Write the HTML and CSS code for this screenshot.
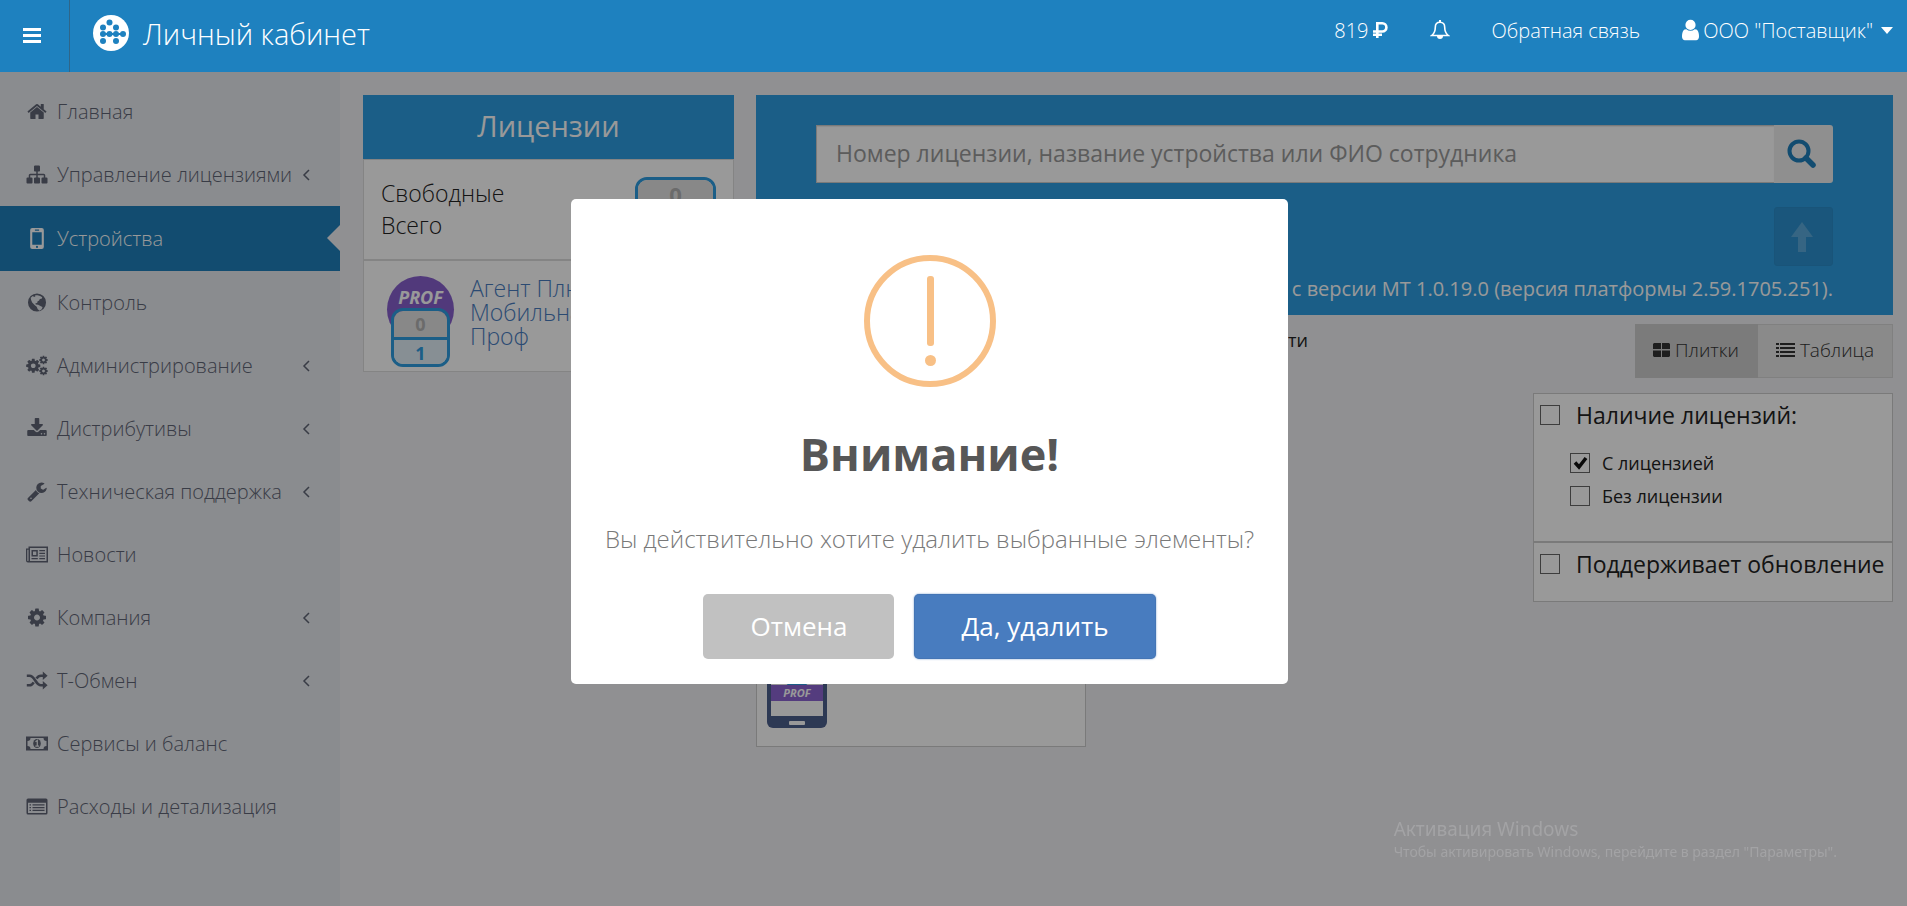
FILE: index.html
```html
<!DOCTYPE html>
<html lang="ru">
<head>
    <meta charset="UTF-8">
    <meta name="viewport" content="width=device-width, initial-scale=1.0">
    <title>Личный кабинет</title>
    <link rel="stylesheet" href="styles.css">
</head>
<body>
    <!-- Иконки -->
    <svg class="sprite" aria-hidden="true">
        <symbol id="i-home" viewBox="0 0 1792 1792"><path d="M1472 992v480q0 26-19 45t-45 19h-384v-384h-256v384h-384q-26 0-45-19t-19-45v-480q0-1 .5-3t.5-3l575-474 575 474q1 2 1 6zm223-69l-62 74q-8 9-21 11h-3q-13 0-21-7l-692-577-692 577q-12 8-24 7-13-2-21-11l-62-74q-8-10-7-23.5t11-21.5l719-599q32-26 76-26t76 26l244 204v-195q0-14 9-23t23-9h192q14 0 23 9t9 23v408l219 182q10 8 11 21.5t-7 23.5z"/></symbol>
        <symbol id="i-sitemap" viewBox="0 0 1792 1792"><path d="M1792 1248v320q0 40-28 68t-68 28h-320q-40 0-68-28t-28-68v-320q0-40 28-68t68-28h96v-192h-512v192h96q40 0 68 28t28 68v320q0 40-28 68t-68 28h-320q-40 0-68-28t-28-68v-320q0-40 28-68t68-28h96v-192h-512v192h96q40 0 68 28t28 68v320q0 40-28 68t-68 28h-320q-40 0-68-28t-28-68v-320q0-40 28-68t68-28h96v-192q0-52 38-90t90-38h512v-192h-96q-40 0-68-28t-28-68v-320q0-40 28-68t68-28h320q40 0 68 28t28 68v320q0 40-28 68t-68 28h-96v192h512q52 0 90 38t38 90v192h96q40 0 68 28t28 68z"/></symbol>
        <symbol id="i-phone" viewBox="0 0 20 20"><path fill-rule="evenodd" d="M5.500 0h9a2 2 0 0 1 2 2v16a2 2 0 0 1-2 2h-9a2 2 0 0 1-2-2V2a2 2 0 0 1 2-2zM5.500 4v12h9V4zM8 1.500v1h4v-1zM10 17a1 1 0 1 0 0 2 1 1 0 0 0 0-2z"/></symbol>
        <symbol id="i-globe" viewBox="0 0 20 20"><path fill-rule="evenodd" d="M10 1.400a8.600 8.600 0 1 0 0 17.200 8.600 8.600 0 0 0 0-17.200zM10.500 3l2.500.8 2 1.200-.6 1.400-1.700.2-.7 1.500-1.600 1-.2 1.300-1.700.3.300 1.300 2.300.1 2.600 1.400 1.600.7-.8 2.300-2 1.300-1.800-1.300-1-2.500-2-1.600-2.300-2.500-1-2.200L4 5.500l2-1.600 1.300.8 1.200-.6-.3-1z"/></symbol>
        <symbol id="i-cog" viewBox="0 0 1792 1792"><path d="M1152 896q0-106-75-181t-181-75-181 75-75 181 75 181 181 75 181-75 75-181zm512-109v222q0 12-8 23t-20 13l-185 28q-19 54-39 91 35 50 107 138 10 12 10 25t-9 23q-27 37-99 108t-94 71q-12 0-26-9l-138-108q-44 23-91 38-16 136-29 186-7 28-36 28h-222q-14 0-24.500-8.500t-11.500-21.500l-28-184q-49-16-90-37l-141 107q-10 9-25 9-14 0-25-11-126-114-165-168-7-10-7-23 0-12 8-23 15-21 51-66.500t54-70.500q-27-50-41-99l-183-27q-13-2-21-12.500t-8-23.500v-222q0-12 8-23t19-13l186-28q14-46 39-92-40-57-107-138-10-12-10-24 0-10 9-23 26-36 98.500-107.500t94.500-71.500q13 0 26 10l138 107q44-23 91-38 16-136 29-186 7-28 36-28h222q14 0 24.500 8.500t11.500 21.500l28 184q49 16 90 37l142-107q9-9 24-9 13 0 25 10 129 119 165 170 7 8 7 22 0 12-8 23-15 21-51 66.500t-54 70.500q26 50 41 98l183 28q13 2 21 12.500t8 23.500z"/></symbol>
        <symbol id="i-cogs" viewBox="0 0 22 20"><use href="#i-cog" x="-1" y="2" width="16.500" height="16.500"/><use href="#i-cog" x="12.500" y="-.5" width="10" height="10"/><use href="#i-cog" x="12.500" y="10.500" width="10" height="10"/></symbol>
        <symbol id="i-download" viewBox="0 0 1792 1792"><path d="M1344 1344q0-26-19-45t-45-19-45 19-19 45 19 45 45 19 45-19 19-45zm256 0q0-26-19-45t-45-19-45 19-19 45 19 45 45 19 45-19 19-45zm128-224v320q0 40-28 68t-68 28h-1472q-40 0-68-28t-28-68v-320q0-40 28-68t68-28h465l135 136q58 56 136 56t136-56l136-136h464q40 0 68 28t28 68zm-325-569q17 41-14 70l-448 448q-18 19-45 19t-45-19l-448-448q-31-29-14-70 17-39 59-39h256v-448q0-26 19-45t45-19h256q26 0 45 19t19 45v448h256q42 0 59 39z"/></symbol>
        <symbol id="i-wrench" viewBox="0 0 1792 1792"><path d="M448 1472q0-26-19-45t-45-19-45 19-19 45 19 45 45 19 45-19 19-45zm644-420l-682 682q-37 37-90 37-52 0-91-37l-106-108q-38-36-38-90 0-53 38-91l681-681q39 98 114.500 173.500t173.500 114.500zm634-435q0 39-23 106-47 134-164.500 217.500t-258.500 83.500q-185 0-316.500-131.500t-131.500-316.500 131.500-316.500 316.500-131.500q58 0 121.500 16.500t107.500 46.500q16 11 16 28t-16 28l-293 169v224l193 107q5-3 79-48.500t135.500-81 70.500-35.500q15 0 23.500 10t8.500 25z"/></symbol>
        <symbol id="i-news" viewBox="0 0 22 20"><path fill-rule="evenodd" d="M2.500 2H22v16H2a2 2 0 0 1-2-2V4h2.500zM4 3.500v13h16.500v-13zM1.300 5.300V16a.6.6 0 0 0 1.200 0V5.300zM5.500 5.500h6.300V12H5.500zM7 7v3.500h3.300V7zM13.300 5.500H19v1.200h-5.700zM13.300 8.200H19v1.200h-5.700zM13.300 10.900H19v1.200h-5.700zM5.500 13.600h6.300v1.200H5.500zM13.300 13.600H19v1.200h-5.700z"/></symbol>
        <symbol id="i-random" viewBox="0 0 22 20"><path d="M.8 5.200h2.700c5.500 0 6 9.600 11.500 9.600h3M.8 14.800h2.700c2 0 3.200-1.300 4.200-3M10.500 8c1.200-1.900 2.500-2.800 4.500-2.800h3" fill="none" stroke="currentColor" stroke-width="2.600"/><path d="M16.800 1l4.800 4.200-4.800 4.200zM16.800 10.600l4.800 4.200-4.800 4.200z"/></symbol>
        <symbol id="i-money" viewBox="0 0 22 20"><path fill-rule="evenodd" d="M0 3h22v14H0zM4.500 4.500a3 3 0 0 1-3 3v5a3 3 0 0 1 3 3h13a3 3 0 0 1 3-3v-5a3 3 0 0 1-3-3z"/><ellipse cx="11" cy="10" rx="3.800" ry="4.600"/><path fill="none" stroke="#e7e9ee" stroke-width="1.300" d="M9.500 8.300L11.300 7v5.500M9.300 12.600h3.800"/></symbol>
        <symbol id="i-list-alt" viewBox="0 0 22 20"><path fill-rule="evenodd" d="M2 2h18a1.500 1.500 0 0 1 1.500 1.500v13A1.500 1.500 0 0 1 20 18H2a1.500 1.500 0 0 1-1.500-1.500v-13A1.500 1.500 0 0 1 2 2zM2 6.200v10.300h18V6.200zM3.500 7.700H5v1.200H3.500zM6.500 7.700h12v1.200h-12zM3.500 10.500H5v1.200H3.500zM6.500 10.500h12v1.200h-12zM3.500 13.300H5v1.200H3.500zM6.500 13.300h12v1.200h-12z"/></symbol>
        <symbol id="i-user" viewBox="256 0 1280 1792"><path d="M1536 1399q0 109-62.500 187t-150.500 78h-854q-88 0-150.500-78t-62.500-187q0-85 8.500-160.500t31.500-152 58.500-131 94-89 134.500-34.500q131 128 313 128t313-128q76 0 134.500 34.500t94 89 58.500 131 31.500 152 8.500 160.500zm-256-887q0 159-112.500 271.500t-271.500 112.500-271.500-112.500-112.500-271.500 112.500-271.500 271.500-112.500 271.500 112.500 112.500 271.500z"/></symbol>
        <symbol id="i-chevron" viewBox="0 0 8 12"><path d="M7 1L2 6l5 5" fill="none" stroke="currentColor" stroke-width="1.500"/></symbol>
    </svg>

    <header class="header">
        <button type="button" class="menu-toggle" aria-label="Меню">
            <svg width="18" height="15" viewBox="0 0 18 15"><path d="M0 0h18v3H0zM0 6h18v3H0zM0 12h18v3H0z"/></svg>
        </button>
        <a href="#" class="brand">
            <svg width="36" height="36" viewBox="0 0 36 36">
                <circle cx="18" cy="18" r="18"/>
                <g class="brand-dots">
                    <circle cx="16.500" cy="7.500" r="3"/>
                    <circle cx="10" cy="12.500" r="3"/><circle cx="23" cy="12.500" r="3"/>
                    <circle cx="10" cy="19" r="3"/><circle cx="16.500" cy="19" r="3"/><circle cx="23" cy="19" r="3"/><circle cx="30" cy="19" r="3"/>
                    <circle cx="10" cy="26" r="3"/><circle cx="23" cy="26" r="3"/>
                    <path d="M10 18h20v2H10z"/>
                </g>
            </svg>
            <span>Личный кабинет</span>
        </a>
        <nav class="top-nav">
            <a href="#" class="balance">819
                <svg width="15" height="16" viewBox="0 0 15 16"><path d="M4.300 16V1.300h5a4 4 0 0 1 0 8.200H0M0 12.800h9" fill="none" stroke="currentColor" stroke-width="2.600"/></svg>
            </a>
            <a href="#" class="bell" aria-label="Уведомления">
                <svg width="20" height="20" viewBox="0 0 20 20"><path d="M10 2.200c-3 0-4.700 2.200-4.700 5 0 4.300-1.500 6.600-3.600 8.300h16.600c-2.100-1.700-3.600-4-3.600-8.300 0-2.800-1.700-5-4.700-5z" fill="none" stroke="currentColor" stroke-width="1.600"/><path d="M9 0h2v2.500H9zM7 16h6a3 3 0 0 1-6 0z"/></svg>
            </a>
            <a href="#">Обратная связь</a>
            <a href="#" class="user">
                <svg width="17" height="24"><use href="#i-user"/></svg>
                <span>ООО "Поставщик"</span>
                <svg class="caret" width="12" height="7" viewBox="0 0 12 7"><path d="M0 0h12L6 7z"/></svg>
            </a>
        </nav>
    </header>

    <div class="page">
        <aside class="sidebar">
            <a href="#" class="menu-item"><svg class="icon"><use href="#i-home"/></svg><span>Главная</span></a>
            <a href="#" class="menu-item"><svg class="icon"><use href="#i-sitemap"/></svg><span>Управление лицензиями</span><svg class="arrow"><use href="#i-chevron"/></svg></a>
            <a href="#" class="menu-item active"><svg class="icon"><use href="#i-phone"/></svg><span>Устройства</span></a>
            <a href="#" class="menu-item"><svg class="icon"><use href="#i-globe"/></svg><span>Контроль</span></a>
            <a href="#" class="menu-item"><svg class="icon"><use href="#i-cogs"/></svg><span>Администрирование</span><svg class="arrow"><use href="#i-chevron"/></svg></a>
            <a href="#" class="menu-item"><svg class="icon"><use href="#i-download"/></svg><span>Дистрибутивы</span><svg class="arrow"><use href="#i-chevron"/></svg></a>
            <a href="#" class="menu-item"><svg class="icon"><use href="#i-wrench"/></svg><span>Техническая поддержка</span><svg class="arrow"><use href="#i-chevron"/></svg></a>
            <a href="#" class="menu-item"><svg class="icon"><use href="#i-news"/></svg><span>Новости</span></a>
            <a href="#" class="menu-item"><svg class="icon"><use href="#i-cog"/></svg><span>Компания</span><svg class="arrow"><use href="#i-chevron"/></svg></a>
            <a href="#" class="menu-item"><svg class="icon"><use href="#i-random"/></svg><span>Т-Обмен</span><svg class="arrow"><use href="#i-chevron"/></svg></a>
            <a href="#" class="menu-item"><svg class="icon"><use href="#i-money"/></svg><span>Сервисы и баланс</span></a>
            <a href="#" class="menu-item"><svg class="icon"><use href="#i-list-alt"/></svg><span>Расходы и детализация</span></a>
        </aside>

        <main class="content">
            <section class="licenses">
                <h2 class="licenses-title">Лицензии</h2>
                <div class="licenses-total">
                    <div>Свободные<br>Всего</div>
                    <div class="counter counter-big"><span class="free">0</span><span class="all">1</span></div>
                </div>
                <div class="license">
                    <div class="license-logo">
                        <span class="prof">PROF</span>
                        <div class="counter"><span class="free">0</span><span class="all">1</span></div>
                    </div>
                    <a href="#" class="license-name">Агент Плюс:<br>Мобильная торговля<br>Проф</a>
                </div>
            </section>

            <section class="devices">
                <div class="search-panel">
                    <form class="search">
                        <input type="text" class="search-input" aria-label="Поиск" placeholder="Номер лицензии, название устройства или ФИО сотрудника">
                        <button type="submit" class="search-button" aria-label="Найти">
                            <svg width="30" height="30" viewBox="0 0 30 30" fill="none" stroke="currentColor"><circle cx="12" cy="12" r="9.500" stroke-width="4"/><path d="M19 19l7 7" stroke-width="5.500" stroke-linecap="round"/></svg>
                        </button>
                    </form>
                    <button type="button" class="up-button" disabled aria-label="Обновить">
                        <svg width="22" height="30" viewBox="0 0 22 30"><path d="M11 0l11 15h-7v15H7V15H0z"/></svg>
                    </button>
                    <p class="note">Обновление поддерживается с версии МТ 1.0.19.0 (версия платформы 2.59.1705.251).</p>
                </div>

                <div class="toolbar">
                    <p class="sort">Сортировать по активности</p>
                    <div class="view">
                        <button type="button" class="view-button pressed">
                            <svg width="17" height="14" viewBox="0 0 17 14"><path d="M1 0h7v6H0V1zM9 0h7l1 1v5H9zM0 7.500h8V14H1l-1-1zM9 7.500h8V13l-1 1H9z"/></svg>
                            Плитки
                        </button>
                        <button type="button" class="view-button">
                            <svg width="19" height="14" viewBox="0 0 19 14"><path d="M0 0h3v2H0zM4 0h15v2H4zM0 4h3v2H0zM4 4h15v2H4zM0 8h3v2H0zM4 8h15v2H4zM0 12h3v2H0zM4 12h15v2H4z"/></svg>
                            Таблица
                        </button>
                    </div>
                </div>

                <div class="devices-body">
                    <div class="tile">
                        <svg width="60" height="94" viewBox="0 0 60 94">
                            <rect width="60" height="94" rx="6" fill="#4c5f8c"/>
                            <path fill="#fff" d="M4 10h52v72H4z"/>
                            <circle cx="30" cy="38" r="16" fill="#2d9de1"/>
                            <path fill="#8c65d2" d="M4 51h52v16H4z"/>
                            <rect x="22" y="87" width="16" height="4" rx="1" fill="#fff"/>
                            <text x="30" y="63" class="tile-prof">PROF</text>
                        </svg>
                    </div>
                    <form class="filter">
                        <div class="filter-group filter-main">
                            <label class="check check-title"><input type="checkbox">Наличие лицензий:</label>
                            <div class="filter-sub">
                                <label class="check"><input type="checkbox" checked>С лицензией</label>
                                <label class="check"><input type="checkbox">Без лицензии</label>
                            </div>
                        </div>
                        <div class="filter-group">
                            <label class="check check-title"><input type="checkbox">Поддерживает обновление</label>
                        </div>
                    </form>
                </div>
            </section>
        </main>
    </div>

    <!-- Окно подтверждения -->
    <div class="overlay">
        <div class="modal" role="dialog" aria-modal="true" aria-labelledby="modal-title">
            <svg class="modal-icon" width="132" height="132" viewBox="0 0 132 132">
                <circle cx="66" cy="66" r="63" fill="none" stroke="#f8c086" stroke-width="6"/>
                <rect x="63" y="21" width="7" height="70" rx="3"/>
                <circle cx="66.500" cy="105.500" r="5.500"/>
            </svg>
            <h2 class="modal-title" id="modal-title">Внимание!</h2>
            <p class="modal-text">Вы действительно хотите удалить выбранные элементы?</p>
            <div class="modal-buttons">
                <button type="button" class="btn btn-cancel">Отмена</button>
                <button type="button" class="btn btn-confirm">Да, удалить</button>
            </div>
        </div>
    </div>

    <div class="watermark">
        <div class="watermark-title">Активация Windows</div>
        <div>Чтобы активировать Windows, перейдите в раздел "Параметры".</div>
    </div>
</body>
</html>
```
FILE: styles.css
```css
* {
    box-sizing: border-box;
}
body {
    margin: 0;
    font-family: "Open Sans", "Noto Sans", sans-serif;
    font-size: 20px;
    font-weight: 300;
    color: #222;
    background-color: #f0f1f4;
}
a {
    color: inherit;
    text-decoration: none;
}
h2,
p {
    margin: 0;
}
button,
input {
    font: inherit;
    margin: 0;
}
svg {
    fill: currentColor;
    flex: none;
}
.sprite {
    position: absolute;
    width: 0;
    height: 0;
}

/* Шапка */
.header {
    position: relative;
    z-index: 20;
    display: flex;
    height: 72px;
    background-color: #1e81bf;
    color: #fff;
}
.menu-toggle {
    width: 70px;
    padding: 0 6px 6px 0;
    border: 0;
    border-right: 1px solid #2f6689;
    background: none;
    color: #fff;
    cursor: pointer;
}
.menu-toggle svg {
    vertical-align: middle;
}
.brand {
    display: flex;
    align-items: center;
    gap: 14px;
    padding: 0 0 6px 23px;
    font-size: 29px;
}
.brand-dots {
    fill: #1e81bf;
}
.top-nav {
    display: flex;
    align-items: center;
    gap: 42px;
    margin-left: auto;
    padding: 0 14px 12px 0;
}
.balance,
.bell,
.user {
    display: flex;
    align-items: center;
    gap: 4px;
}
.user .caret {
    margin-left: 4px;
}

/* Боковое меню */
.page {
    display: flex;
    min-height: calc(100vh - 72px);
}
.sidebar {
    flex: none;
    width: 340px;
    padding-top: 8px;
    background-color: #e7e9ee;
    color: #5f6575;
}
.menu-item {
    position: relative;
    display: flex;
    align-items: center;
    gap: 9px;
    height: 63px;
    padding: 0 30px 0 26px;
}
.menu-item .icon {
    width: 22px;
    height: 21px;
}
.menu-item .arrow {
    width: 8px;
    height: 12px;
    margin-left: auto;
}
.menu-item.active {
    height: 65px;
    background-color: #1e7fbb;
    color: #fff;
}
.menu-item.active::after {
    content: "";
    position: absolute;
    right: 0;
    top: 19px;
    border: 13px solid transparent;
    border-left: 0;
    border-right-color: #f0f1f4;
}

/* Лицензии */
.content {
    flex: 1;
    display: flex;
    align-items: flex-start;
    gap: 22px;
    padding: 23px 14px 20px 23px;
}
.licenses {
    flex: none;
    width: 371px;
}
.licenses-title {
    height: 64px;
    background-color: #2d9de1;
    color: #fff;
    font-size: 29px;
    font-weight: 400;
    line-height: 62px;
    text-align: center;
}
.licenses-total,
.license {
    display: flex;
    border: 1px solid #ddd;
    background-color: #fff;
}
.licenses-total {
    justify-content: space-between;
    height: 101px;
    padding: 17px 17px 0 17px;
    font-size: 23px;
    line-height: 32px;
}
.license {
    gap: 16px;
    height: 112px;
    padding: 15px 23px 0;
}
.license-name {
    color: #487cbf;
    font-size: 23px;
    line-height: 24px;
}
.license-logo {
    width: 67px;
    height: 91px;
}
.prof {
    display: block;
    height: 67px;
    border-radius: 50%;
    background-color: #8860ce;
    color: #fff;
    font-size: 18px;
    font-weight: 700;
    font-style: italic;
    line-height: 42px;
    text-align: center;
}
.counter {
    display: flex;
    flex-direction: column;
    width: 59px;
    height: 59px;
    margin: 0 auto;
    border: 3px solid #2d9de1;
    border-radius: 12px;
    overflow: hidden;
    font-size: 18px;
    font-weight: 700;
    line-height: 26px;
    text-align: center;
}
.license-logo .counter {
    position: relative;
    margin-top: -35px;
}
.counter .free {
    flex: 1;
    background-color: #e3e3e3;
    color: #b2b2b2;
}
.counter .all {
    flex: 1;
    border-top: 3px solid #2d9de1;
    background-color: #e1eff7;
    color: #2d9de1;
}
.counter-big {
    width: 81px;
    height: 70px;
    margin: 0;
    font-size: 22px;
    line-height: 28px;
}

/* Устройства */
.devices {
    flex: 1;
    min-width: 0;
}
.search-panel {
    display: flex;
    flex-direction: column;
    align-items: flex-end;
    height: 220px;
    padding: 30px 60px 0;
    background-color: #2d9de1;
    color: #fff;
}
.search {
    display: flex;
    align-self: stretch;
    height: 58px;
    margin-bottom: 24px;
}
.search-input {
    flex: 1;
    padding: 0 19px 2px;
    border: 1px solid #ccc;
    border-right: 0;
    background-color: #fff;
    box-shadow: inset 0 1px 1px rgba(0, 0, 0, 0.08);
    font-size: 23px;
    font-weight: 400;
}
.search-input::placeholder {
    color: #999;
    opacity: 1;
}
.search-button {
    width: 59px;
    padding: 0 3px 0 0;
    border: 0;
    border-radius: 0 3px 3px 0;
    background-color: #eee;
    color: #1e7fbb;
}
.search-button svg {
    vertical-align: middle;
    fill: none;
}
.up-button {
    width: 59px;
    height: 59px;
    padding: 0 3px 0 0;
    border: 1px solid #2a8dca;
    border-radius: 3px;
    background-color: #2c90cf;
    color: #5aa9da;
}
.up-button svg {
    vertical-align: middle;
}
.note {
    margin-top: 9px;
    font-weight: 400;
    line-height: 27px;
    white-space: nowrap;
}
.toolbar {
    display: flex;
    justify-content: space-between;
    margin-top: 9px;
}
.sort {
    width: 552px;
    font-size: 18px;
    font-weight: 400;
    line-height: 32px;
    text-align: right;
}
.view {
    display: flex;
    height: 54px;
}
.view-button {
    display: flex;
    align-items: center;
    gap: 5px;
    padding: 0 18px 2px;
    border: 1px solid #d5d5d5;
    border-left: 0;
    background-color: #e6e6e6;
    color: #333;
    font-size: 19px;
}
.view-button.pressed {
    border-color: #cecece;
    background-color: #cecece;
}
.devices-body {
    display: flex;
    justify-content: space-between;
    align-items: flex-start;
    margin-top: 15px;
}
.tile {
    display: flex;
    align-items: flex-end;
    width: 330px;
    height: 354px;
    padding: 0 10px 18px;
    border: 1px solid #ccc;
    background-color: #fff;
}
.tile-prof {
    fill: #fff;
    font-size: 11px;
    font-weight: 700;
    font-style: italic;
    text-anchor: middle;
}
.filter {
    width: 360px;
}
.filter-group {
    height: 60px;
    padding: 0 6px;
    border: 1px solid #ccc;
    background-color: #fff;
}
.filter-main {
    height: 149px;
}
.check {
    display: flex;
    align-items: center;
    gap: 12px;
    height: 33px;
    font-size: 18px;
    font-weight: 400;
    white-space: nowrap;
}
.check input {
    flex: none;
    appearance: none;
    width: 20px;
    height: 20px;
    border: 1px solid #666;
    background-color: #fff;
}
.check input:checked {
    background-image: url("data:image/svg+xml,%3Csvg xmlns='http://www.w3.org/2000/svg' viewBox='0 0 18 18'%3E%3Cpath d='M4 8.500l4 4.500 7-9' fill='none' stroke='%23111' stroke-width='3.500'/%3E%3C/svg%3E");
}
.check-title {
    gap: 16px;
    height: 42px;
    font-size: 23px;
}
.filter-sub {
    padding: 10px 0 0 30px;
}

/* Модальное окно */
.overlay {
    position: fixed;
    inset: 0;
    z-index: 10;
    display: flex;
    justify-content: center;
    align-items: center;
    padding: 0 48px 23px 0;
    background-color: rgba(0, 0, 0, 0.4);
}
.modal {
    display: flex;
    flex-direction: column;
    align-items: center;
    width: 717px;
    padding: 56px 20px 25px;
    border-radius: 5px;
    background-color: #fff;
}
.modal-icon {
    fill: #f8c086;
}
.modal-title {
    margin-top: 37px;
    color: #575757;
    font-size: 45px;
    font-weight: 700;
    line-height: 60px;
}
.modal-text {
    margin-top: 37px;
    color: #797979;
    font-size: 24px;
    line-height: 36px;
}
.modal-buttons {
    display: flex;
    gap: 20px;
    margin-top: 37px;
}
.btn {
    height: 65px;
    padding: 0 47px 2px;
    border: 0;
    border-radius: 5px;
    color: #fff;
    font-size: 26px;
    font-weight: 400;
    cursor: pointer;
}
.btn-cancel {
    background-color: #c1c1c1;
}
.btn-confirm {
    background-color: #487cbf;
    box-shadow: 0 0 2px rgba(72, 124, 191, 0.8), inset 0 0 0 1px rgba(0, 0, 0, 0.05);
}

.watermark {
    position: fixed;
    right: 70px;
    bottom: 44px;
    z-index: 40;
    color: #a3a3a5;
    font-family: "Noto Sans", sans-serif;
    font-size: 14px;
    font-weight: 400;
    line-height: 20px;
    pointer-events: none;
}
.watermark-title {
    font-size: 19px;
    line-height: 26px;
}
```
